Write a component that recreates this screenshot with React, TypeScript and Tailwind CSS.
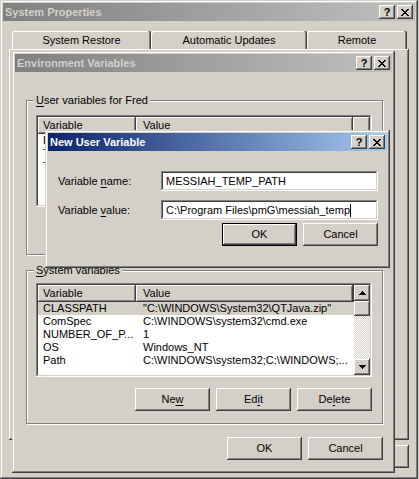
import React from 'react';

// classic 3D edges
const frame =
  'shadow-[inset_-1px_-1px_#404040,inset_1px_1px_#d4d0c8,inset_-2px_-2px_#808080,inset_2px_2px_#ffffff]';
const raised =
  'shadow-[inset_-1px_-1px_#404040,inset_1px_1px_#ffffff,inset_-2px_-2px_#808080,inset_2px_2px_#d4d0c8]';
const header = 'shadow-[inset_-1px_-1px_#404040,inset_1px_1px_#ffffff,inset_-2px_-2px_#808080]';
const sunken =
  'shadow-[inset_-1px_-1px_#ffffff,inset_1px_1px_#808080,inset_-2px_-2px_#d4d0c8,inset_2px_2px_#404040]';

const XGlyph = () => (
  <svg width="8" height="7" viewBox="0 0 8 7" shapeRendering="crispEdges">
    <rect x="0" y="0" width="2" height="1" />
    <rect x="6" y="0" width="2" height="1" />
    <rect x="1" y="1" width="2" height="1" />
    <rect x="5" y="1" width="2" height="1" />
    <rect x="2" y="2" width="4" height="1" />
    <rect x="3" y="3" width="2" height="1" />
    <rect x="2" y="4" width="4" height="1" />
    <rect x="1" y="5" width="2" height="1" />
    <rect x="5" y="5" width="2" height="1" />
    <rect x="0" y="6" width="2" height="1" />
    <rect x="6" y="6" width="2" height="1" />
  </svg>
);

const Arrow = ({ down }: { down?: boolean }) => (
  <svg
    width="7"
    height="4"
    viewBox="0 0 7 4"
    shapeRendering="crispEdges"
    className={down ? 'rotate-180' : ''}
  >
    <rect x="3" y="0" width="1" height="1" />
    <rect x="2" y="1" width="3" height="1" />
    <rect x="1" y="2" width="5" height="1" />
    <rect x="0" y="3" width="7" height="1" />
  </svg>
);

const CapBtn = ({ children }: { children: React.ReactNode }) => (
  <div
    className={`w-[16px] h-[14px] bg-[#d4d0c8] flex items-center justify-center text-black font-bold text-[11px] leading-none ${raised}`}
  >
    {children}
  </div>
);

const TitleBar = ({ title, active }: { title: string; active?: boolean }) => (
  <div
    className={`h-[18px] flex items-center justify-between ${
      active
        ? 'bg-[linear-gradient(to_right,#0a246a,#a6caf0)] text-white'
        : 'bg-[linear-gradient(to_right,#808080,#c0c0c0)] text-[#d4d0c8]'
    }`}
  >
    <span className="pl-[2px] font-bold leading-[18px]">{title}</span>
    <div className="flex gap-[2px] pr-[2px]">
      <CapBtn>?</CapBtn>
      <CapBtn>
        <XGlyph />
      </CapBtn>
    </div>
  </div>
);

const Btn = ({ children, def }: { children: React.ReactNode; def?: boolean }) => (
  <div
    className={`w-[75px] h-[23px] bg-[#d4d0c8] flex items-center justify-center ${
      def ? 'border border-black' : ''
    } ${raised}`}
  >
    {children}
  </div>
);

const U = ({ children }: { children: React.ReactNode }) => (
  <span className="underline underline-offset-[2px]">{children}</span>
);

const GroupBox = ({
  label,
  h,
  children,
}: {
  label: React.ReactNode;
  h: string;
  children: React.ReactNode;
}) => (
  <div
    className={`relative w-[357px] ${h} border border-[#808080] shadow-[1px_1px_#ffffff,inset_1px_1px_#ffffff] px-[9px]`}
  >
    <span className="absolute left-[7px] -top-[7px] px-[2px] bg-[#d4d0c8]">{label}</span>
    {children}
  </div>
);

type Row = { name: string; value: string };

const ListView = ({
  rows,
  h,
  selected,
  scroll,
}: {
  rows: Row[];
  h: string;
  selected?: number;
  scroll?: boolean;
}) => (
  <div className={`w-[336px] ${h} bg-white p-[2px] flex ${sunken}`}>
    <div className="flex-1 flex flex-col overflow-hidden">
      <div className="flex h-[17px] shrink-0 bg-[#d4d0c8]">
        <div className={`w-[98px] pl-[5px] flex items-center ${header}`}>Variable</div>
        <div className={`w-[217px] pl-[7px] flex items-center ${header}`}>Value</div>
        <div className={`flex-1 ${header}`} />
      </div>
      {rows.map((r, i) => (
        <div
          key={r.name}
          className={`flex h-[13px] whitespace-nowrap ${i === selected ? 'bg-[#d4d0c8]' : ''}`}
        >
          <div className="w-[98px] pl-[5px] overflow-hidden">{r.name}</div>
          <div className="pl-[7px]">{r.value}</div>
        </div>
      ))}
    </div>
    {scroll && (
      <div className="w-[16px] flex flex-col">
        <div className={`h-[16px] bg-[#d4d0c8] flex items-center justify-center ${raised}`}>
          <Arrow />
        </div>
        <div className={`h-[15px] bg-[#d4d0c8] ${raised}`} />
        <div className="flex-1 bg-[image:repeating-conic-gradient(#d4d0c8_0%_25%,#ffffff_0%_50%)] bg-[length:2px_2px]" />
        <div className={`h-[16px] bg-[#d4d0c8] flex items-center justify-center ${raised}`}>
          <Arrow down />
        </div>
      </div>
    )}
  </div>
);

// only the first letters peek out from under the dialog
const userVars: Row[] = [
  { name: 'PATH', value: '' },
  { name: 'TEMP', value: '' },
  { name: 'TMP', value: '' },
];

const systemVars: Row[] = [
  { name: 'CLASSPATH', value: '"C:\\WINDOWS\\System32\\QTJava.zip"' },
  { name: 'ComSpec', value: 'C:\\WINDOWS\\system32\\cmd.exe' },
  { name: 'NUMBER_OF_P...', value: '1' },
  { name: 'OS', value: 'Windows_NT' },
  { name: 'Path', value: 'C:\\WINDOWS\\system32;C:\\WINDOWS;...' },
];

const SystemProperties = () => (
  <div className={`absolute left-0 top-0 w-[418px] h-[479px] bg-[#d4d0c8] flex flex-col ${frame}`}>
    <div className="mx-[3px] mt-[3px]">
      <TitleBar title="System Properties" />
    </div>
    <div className="flex ml-[12px] mt-[10px] h-[18px]">
      {[
        ['System Restore', 'w-[139px]'],
        ['Automatic Updates', 'w-[156px]'],
        ['Remote', 'w-[100px]'],
      ].map(([t, w]) => (
        <div
          key={t}
          className={`${w} h-[18px] rounded-t-[2px] flex items-center justify-center shadow-[inset_-1px_0_#404040,inset_-2px_0_#808080,inset_1px_1px_#ffffff]`}
        >
          {t}
        </div>
      ))}
    </div>
    <div className={`ml-[9px] w-[400px] h-[391px] ${header}`} />
    <div className="flex justify-end gap-[6px] mr-[9px] mt-[5px]">
      <Btn>OK</Btn>
      <Btn>Cancel</Btn>
      <Btn>Apply</Btn>
    </div>
  </div>
);

const EnvironmentVariables = () => (
  <div
    className={`absolute left-[12px] top-[51px] w-[383px] h-[422px] bg-[#d4d0c8] flex flex-col ${frame}`}
  >
    <div className="mx-[3px] mt-[3px]">
      <TitleBar title="Environment Variables" />
    </div>
    <div className="ml-[14px] mt-[28px]">
      <GroupBox
        h="h-[155px]"
        label={
          <>
            <U>U</U>ser variables for Fred
          </>
        }
      >
        <div className="mt-[14px]">
          <ListView rows={userVars} h="h-[92px]" />
        </div>
      </GroupBox>
    </div>
    <div className="ml-[14px] mt-[15px]">
      <GroupBox
        h="h-[154px]"
        label={
          <>
            <U>S</U>ystem variables
          </>
        }
      >
        <div className="mt-[12px]">
          <ListView rows={systemVars} h="h-[94px]" selected={0} scroll />
        </div>
        <div className="flex justify-end gap-[6px] w-[336px] mt-[11px]">
          <Btn>
            Ne<U>w</U>
          </Btn>
          <Btn>
            Ed<U>i</U>t
          </Btn>
          <Btn>
            De<U>l</U>ete
          </Btn>
        </div>
      </GroupBox>
    </div>
    <div className="flex justify-end gap-[6px] mr-[12px] mt-[13px]">
      <Btn>OK</Btn>
      <Btn>Cancel</Btn>
    </div>
  </div>
);

const NewUserVariable = () => (
  <div
    className={`absolute left-[45px] top-[130px] w-[345px] h-[138px] bg-[#d4d0c8] flex flex-col ${frame}`}
  >
    <div className="mx-[3px] mt-[3px]">
      <TitleBar title="New User Variable" active />
    </div>
    <div className="flex items-center ml-[13px] mt-[20px]">
      <span className="w-[103px]">
        Variable <U>n</U>ame:
      </span>
      <div className={`w-[217px] h-[20px] bg-white flex items-center pl-[5px] ${sunken}`}>
        MESSIAH_TEMP_PATH
      </div>
    </div>
    <div className="flex items-center ml-[13px] mt-[9px]">
      <span className="w-[103px]">
        Variable <U>v</U>alue:
      </span>
      <div className={`w-[217px] h-[20px] bg-white flex items-center pl-[5px] ${sunken}`}>
        <span className="whitespace-nowrap">C:\Program Files\pmG\messiah_temp</span>
        <span className="inline-block w-px h-[13px] bg-black" />
      </div>
    </div>
    <div className="flex justify-end gap-[6px] mr-[12px] mt-[3px]">
      <Btn def>OK</Btn>
      <Btn>Cancel</Btn>
    </div>
  </div>
);

const App: React.FC = () => {
  return (
    <div className="relative w-[419px] h-[479px] overflow-hidden bg-[#d4d0c8] font-['Liberation_Sans',Arial,sans-serif] text-[11px] leading-[13px] text-black">
      <SystemProperties />
      <EnvironmentVariables />
      <NewUserVariable />
    </div>
  );
};

export default App;
